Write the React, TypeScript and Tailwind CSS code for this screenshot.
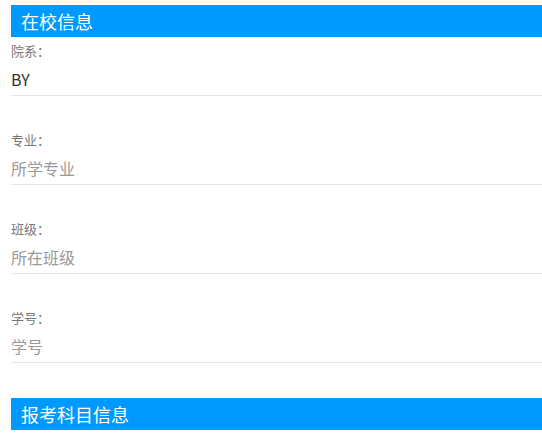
const font = { fontFamily: '"Noto Sans CJK SC", "Noto Sans", sans-serif' };

interface FieldProps {
  label: string;
  value?: string;
  placeholder: string;
}

function Field({ label, value, placeholder }: FieldProps) {
  return (
    <div className="mb-[33px] last:mb-[35px]">
      <div className="h-[22px] leading-[22px] text-[13px] text-[#777]">{label}：</div>
      <input
        className="block w-full h-[34px] border-b border-[#e5e5e5] text-[16px] text-[#333] placeholder:text-[#999] outline-none bg-transparent"
        defaultValue={value}
        placeholder={placeholder}
        readOnly
        style={font}
      />
    </div>
  );
}

function SectionTitle({ children }: { children: string }) {
  return (
    <div className="h-[32px] leading-[32px] bg-[#0099ff] text-white text-[18px] pl-[10px]">
      {children}
    </div>
  );
}

export default function App() {
  return (
    <div className="w-[542px] h-[433px] overflow-hidden bg-white pl-[11px] pt-[5px]" style={font}>
      <SectionTitle>在校信息</SectionTitle>
      <div className="pt-[3px]">
        <Field label="院系" value="BY" placeholder="所在院系" />
        <Field label="专业" placeholder="所学专业" />
        <Field label="班级" placeholder="所在班级" />
        <Field label="学号" placeholder="学号" />
      </div>
      <SectionTitle>报考科目信息</SectionTitle>
    </div>
  );
}
